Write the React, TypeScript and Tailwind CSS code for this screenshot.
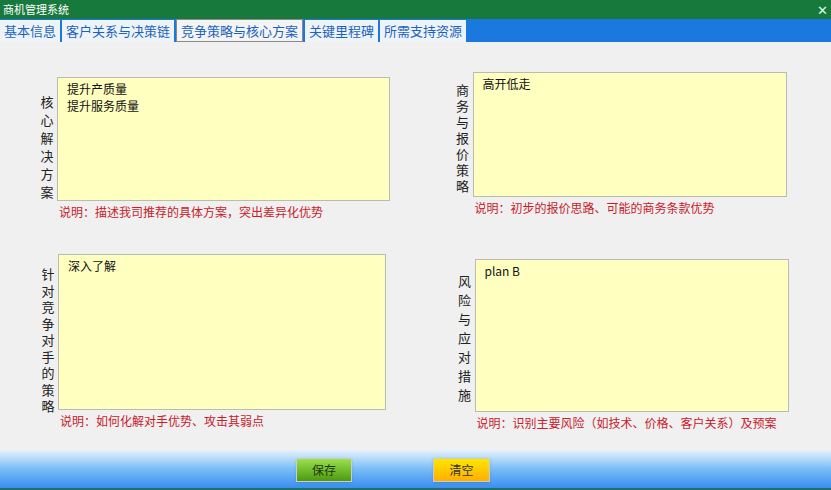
import React from "react";

const F = { fontFamily: '"Microsoft YaHei","Noto Sans CJK SC",sans-serif' };

function Panel({ label, text, note, cls, labelCls, boxCls }: { label: string; text: string; note: string; cls: string; labelCls: string; boxCls: string }) {
  return (
    <div className={`flex items-start ${cls}`}>
      <div className={`w-[20px] flex flex-col items-center text-[13px] text-[#222] ${labelCls}`}>
        {label.split("").map((c, i) => <span key={i}>{c}</span>)}
      </div>
      <div className="flex flex-col">
        <div className={`bg-[#ffffc0] border border-[#b9bcae] px-[9px] py-[2px] text-[12px] leading-[17px] text-[#111] whitespace-pre ${boxCls}`}>{text}</div>
        <div className="text-[12px] text-[#c8202a] mt-[2px] ml-[2px]">{note}</div>
      </div>
    </div>
  );
}

export default function App() {
  const tabs = ["基本信息", "客户关系与决策链", "竞争策略与核心方案", "关键里程碑", "所需支持资源"];
  return (
    <div style={F} className="w-[831px] h-[490px] flex flex-col bg-[#f0f0f0] overflow-hidden">
      <div className="h-[19px] bg-[#177a3c] text-white text-[11px] flex items-center justify-between px-[3px]">
        <span>商机管理系统</span><span className="text-[13px] text-[#dfe]">✕</span>
      </div>
      <div className="h-[23px] bg-[#1a78de] flex items-end">
        {tabs.map((t, i) => (
          <div key={t} className={`px-[4px] flex items-center text-[13px] text-[#1b63c0] mr-[2px] ${i === 2 ? "bg-[#f4f4f4] border border-[#8a8a8a] h-[23px]" : "bg-[#eef3f8] h-[22px]"}`}>{t}</div>
        ))}
      </div>
      <div className="flex-1 grid grid-cols-2 content-start">
        <Panel label="核心解决方案" text={"提升产质量\n提升服务质量"} note="说明：描述我司推荐的具体方案，突出差异化优势" cls="ml-[37px] mt-[35px]" labelCls="pt-[16px] leading-[18px]" boxCls="w-[333px] h-[124px]" />
        <Panel label="商务与报价策略" text="高开低走" note="说明：初步的报价思路、可能的商务条款优势" cls="ml-[37px] mt-[30px]" labelCls="pt-[10px] leading-[16px]" boxCls="w-[314px] h-[125px]" />
        <Panel label="针对竞争对手的策略" text="深入了解" note="说明：如何化解对手优势、攻击其弱点" cls="ml-[38px] mt-[33px]" labelCls="pt-[12px] leading-[16.5px]" boxCls="w-[328px] h-[156px]" />
        <Panel label="风险与应对措施" text="plan B" note="说明：识别主要风险（如技术、价格、客户关系）及预案" cls="ml-[39px] mt-[38px]" labelCls="pt-[12px] leading-[19px]" boxCls="w-[314px] h-[153px]" />
      </div>
      <div className="h-[40px] bg-gradient-to-b from-[#e6f2fc] via-[#78bdf6] to-[#3a8df0] border-b-2 border-[#1f6f6a] flex items-center pt-[2px]">
        <div className="ml-[296px] w-[56px] h-[24px] bg-gradient-to-b from-[#9be04c] to-[#4b9a0c] border border-[#ccc] shadow flex items-center justify-center text-[12px] text-[#1a3a0a]">保存</div>
        <div className="ml-[81px] w-[57px] h-[24px] bg-gradient-to-b from-[#ffe600] to-[#ffae00] border border-[#ccc] shadow flex items-center justify-center text-[12px] text-[#333]">清空</div>
      </div>
    </div>
  );
}
